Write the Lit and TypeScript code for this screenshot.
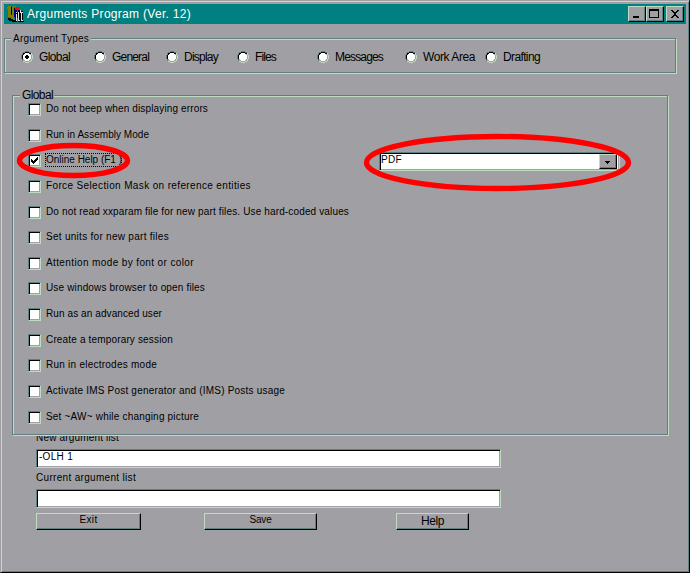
import { LitElement, html, css, svg, nothing } from "lit";
import { customElement, property, state } from "lit/decorators.js";
import { classMap } from "lit/directives/class-map.js";
import { styleMap } from "lit/directives/style-map.js";

/** A single line of text tracked out (or in) to fill a given width. */
@customElement("ui-text")
class UiText extends LitElement {
  static styles = css`
    :host { display: block; flex: none; white-space: pre; }
    .t { display: inline-block; }
  `;
  @property() text = "";
  @property({ type: Number }) w = 0;
  @state() spacing = 0;

  updated(changed: Map<string, unknown>) {
    if (!changed.has("text") && !changed.has("w")) return;
    const el = this.renderRoot.querySelector(".t") as HTMLElement;
    const natural = el.getBoundingClientRect().width - this.spacing * this.text.length;
    this.spacing = (this.w + 1 - natural) / this.text.length;
  }
  render() {
    return html`<span class="t" style=${styleMap({ letterSpacing: this.spacing + "px" })}>${this.text}</span>`;
  }
}

const TYPES = [
  { label: "Global", cell: 73, w: 30 },
  { label: "General", cell: 72, w: 36 },
  { label: "Display", cell: 71, w: 33 },
  { label: "Files", cell: 80, w: 20 },
  { label: "Messages", cell: 88, w: 47 },
  { label: "Work Area", cell: 80, w: 51 },
  { label: "Drafting", cell: 80, w: 36 },
];

const OPTIONS = [
  { label: "Do not beep when displaying errors", w: 161, h: 26 },
  { label: "Run in Assembly Mode", w: 102, h: 25 },
  { label: "Online Help (F1 )", w: 75, h: 26 },
  { label: "Force Selection Mask on reference entities", w: 204, h: 26 },
  { label: "Do not read xxparam file for new part files. Use hard-coded values", w: 302, h: 25 },
  { label: "Set units for new part files", w: 122, h: 26 },
  { label: "Attention mode by font or color", w: 147, h: 25 },
  { label: "Use windows browser to open files", w: 158, h: 26 },
  { label: "Run as an advanced user", w: 115, h: 26 },
  { label: "Create a temporary session", w: 126, h: 25 },
  { label: "Run in electrodes mode", w: 110, h: 26 },
  { label: "Activate IMS Post generator and (IMS) Posts usage", w: 238, h: 26 },
  { label: "Set ~AW~ while changing picture", w: 152, h: 13 },
];

@customElement("app-root")
class AppRoot extends LitElement {
  static styles = css`
    :host {
      --face: #a0a0a4; --hi: #c0dcc0; --lo: #5f8080;
      display: block; width: 690px; height: 573px; overflow: hidden;
      font: 10px/12px "Liberation Sans", Arial, sans-serif; color: #000;
    }
    * { box-sizing: border-box; }
    svg { display: block; flex: none; }
    .window {
      position: relative; width: 690px; height: 573px; background: var(--face);
      border: 1px solid; border-color: var(--face) #000 #000 var(--face);
      box-shadow: inset 1px 1px var(--hi), inset -1px -1px var(--lo);
      padding: 3px 2px 0 3px;
    }
    .title { display: flex; height: 20px; width: 682px; background: #008080; padding: 2px 2px 0 3px; }
    .caption { color: #fff; font-size: 12px; line-height: 14px; margin: 1px 0 0 3px; }
    .buttons { display: flex; margin-left: auto; }
    .raised {
      background: var(--face); border: 1px solid; border-color: var(--hi) #000 #000 var(--hi);
      box-shadow: inset -1px -1px var(--lo);
    }
    .wb { width: 18px; height: 16px; }
    .wb.gap { margin-left: 2px; }
    .etched { border: 1px solid var(--lo); box-shadow: 1px 1px var(--hi), inset 1px 1px var(--hi); }
    .types { width: 672px; height: 35px; margin-top: 14px; padding-left: 6px; }
    .legend { background: var(--face); padding: 0 2px; }
    .types .legend { margin-top: -6px; height: 12px; width: 80px; }
    .radios { display: flex; margin: 6px 0 0 10px; }
    .radio { display: flex; flex: none; gap: 6px; font-size: 12px; line-height: 13px; }
    .options { width: 656px; height: 340px; margin: 22px 0 0 8px; padding-left: 7px; }
    .options .legend { height: 15px; margin-top: -8px; width: 34px; font-size: 12px; line-height: 15px; }
    .rows { padding-left: 8px; }
    .row { display: flex; }
    .sunken {
      background: #fff; border: 1px solid; border-color: var(--lo) var(--hi) var(--hi) var(--lo);
      box-shadow: inset 1px 1px #000, inset -1px -1px var(--face);
    }
    .check { width: 13px; height: 13px; flex: none; }
    .lab { height: 12px; margin-left: 5px; }
    .focus { outline: 1px dotted #000; width: 75px; }
    .combo {
      display: flex; justify-content: space-between; width: 241px; height: 19px;
      margin: -2px 0 -8px 258px; padding: 1px 2px 0 1px;
    }
    .drop { width: 18px; height: 15px; }
    .form { padding-left: 32px; width: 520px; margin-top: 1px; }
    .clip { height: 13px; overflow: hidden; }
    .clip ui-text { margin-top: -4px; }
    .field { width: 465px; height: 19px; padding: 1px 0 0 2px; }
    .second { height: 21px; padding-top: 4px; }
    .actions { display: flex; margin-top: 5px; }
    .btn { height: 17px; display: flex; justify-content: center; }
    .exit { width: 105px; }
    .save { width: 113px; margin-left: 63px; }
    .help { width: 73px; margin-left: 79px; font-size: 12px; line-height: 15px; }
    .mark { position: absolute; left: -1px; top: -1px; pointer-events: none; }
  `;

  @state() private active = "Global";
  @state() private checked = new Set(["Online Help (F1 )"]);

  private toggle(label: string) {
    const next = new Set(this.checked);
    if (!next.delete(label)) next.add(label);
    this.checked = next;
  }

  private radio(on: boolean) {
    return html`<svg width="12" height="12" viewBox="0 0 12 12" shape-rendering="crispEdges">
      <path fill="#fff" d="M4 2h4v1h1v1h1v4h-1v1h-1v1h-4v-1h-1v-1h-1v-4h1v-1h1z"/>
      <path fill="#5f8080" d="M4 0h4v1h2v1h-2v-1h-4v1h-2v-1h2zM1 2h1v2h-1v4h1v2h-1v-2h-1v-4h1z"/>
      <path fill="#000" d="M4 1h4v1h2v1h-2v-1h-4v1h-1v1h-1v4h-1v-4h1v-2h2z"/>
      <path fill="#c0dcc0" d="M10 2h1v2h1v4h-1v2h-1v1h-2v1h-4v-1h-2v-1h2v1h4v-1h2v-2h1v-4h-1z"/>
      ${on ? svg`<path fill="#000" d="M5 4h2v1h1v2h-1v1h-2v-1h-1v-2h1z"/>` : nothing}
    </svg>`;
  }

  private logo() {
    return html`<svg width="17" height="17" viewBox="0 0 17 17" shape-rendering="crispEdges">
      <path fill="#808000" d="M0 1h1v-1h3v9h1v2h-4v-8h-1zM5 1h1v-1h3v1h-2v4h2v5h-2v3h2v2h-4v-1h-2v-3h2z"/>
      <path fill="#000" d="M4 1h1v8h-1zM7 2h1v3h-1zM1 12h3v1h2v1h4v2h-5v-1h-3v-1h-1zM11 4h2v1h3v10h1v1h-6z"/>
      <path fill="#000080" d="M7 4h3v2h1v6h-1v3h-2v-4h-1z"/>
      <path fill="#f00" d="M9 1h3v3h-4v-2h1z"/>
      <path fill="#e0e0e0" d="M9 6h1v1h-1zM9 8h1v7h-1zM11 6h1v8h1v1h-2zM13 4h1v2h2v1h-1v7h1v1h-2v-8h-1z"/>
    </svg>`;
  }

  render() {
    return html`
      <div class="window">
        <div class="title">
          ${this.logo()}
          <ui-text class="caption" .text=${"Arguments Program (Ver. 12)"} .w=${163}></ui-text>
          <div class="buttons">
            <div class="wb raised"><svg width="16" height="14" shape-rendering="crispEdges"><path d="M4 9h6v2h-6z"/></svg></div>
            <div class="wb raised"><svg width="16" height="14" shape-rendering="crispEdges"><path fill-rule="evenodd" d="M2 2h10v9h-10zM3 4h8v6h-8z"/></svg></div>
            <div class="wb raised gap"><svg width="16" height="14" shape-rendering="crispEdges"><path d="M4 3h2v1h1v1h2v-1h1v-1h2v1h-1v1h-1v1h-1v2h1v1h1v1h1v1h-2v-1h-1v-1h-2v1h-1v1h-2v-1h1v-1h1v-1h1v-2h-1v-1h-1v-1h-1z"/></svg></div>
          </div>
        </div>

        <div class="types etched">
          <div class="legend"><ui-text .text=${"Argument Types"} .w=${75}></ui-text></div>
          <div class="radios">
            ${TYPES.map((t) => html`
              <div class="radio" style=${styleMap({ width: t.cell + "px" })} @click=${() => (this.active = t.label)}>
                ${this.radio(this.active === t.label)}
                <ui-text .text=${t.label} .w=${t.w}></ui-text>
              </div>`)}
          </div>
        </div>

        <div class="options etched">
          <div class="legend"><ui-text .text=${"Global"} .w=${30}></ui-text></div>
          <div class="rows">
            ${OPTIONS.map((o, i) => html`
              <div class="row" style=${styleMap({ height: o.h + "px" })}>
                <div class="check sunken" @click=${() => this.toggle(o.label)}>
                  ${this.checked.has(o.label)
                    ? html`<svg width="11" height="11" shape-rendering="crispEdges"><path d="M2 4h1v1h1v1h1v-1h1v-1h1v-1h1v-1h1v3h-1v1h-1v1h-1v1h-1v1h-1v-1h-1v-1h-1z"/></svg>`
                    : nothing}
                </div>
                <div class=${classMap({ lab: true, focus: i === 2 })}><ui-text .text=${o.label} .w=${o.w}></ui-text></div>
                ${i === 2
                  ? html`<div class="combo sunken"><ui-text .text=${"PDF"} .w=${20}></ui-text>
                      <div class="drop raised"><svg width="16" height="13" shape-rendering="crispEdges"><path d="M5 6h5v1h-1v1h-1v1h-1v-1h-1v-1h-1z"/></svg></div></div>`
                  : nothing}
              </div>`)}
          </div>
        </div>

        <div class="form">
          <div class="clip"><ui-text .text=${"New argument list"} .w=${82}></ui-text></div>
          <div class="field sunken"><ui-text .text=${"-OLH 1"} .w=${33}></ui-text></div>
          <div class="second"><ui-text .text=${"Current argument list"} .w=${99}></ui-text></div>
          <div class="field sunken"></div>
          <div class="actions">
            <div class="btn raised exit"><ui-text .text=${"Exit"} .w=${17}></ui-text></div>
            <div class="btn raised save"><ui-text .text=${"Save"} .w=${21}></ui-text></div>
            <div class="btn raised help"><ui-text .text=${"Help"} .w=${22}></ui-text></div>
          </div>
        </div>

        <svg class="mark" width="690" height="573" fill="none" stroke="#f00" stroke-width="5.4">
          <ellipse cx="73.5" cy="160.5" rx="54" ry="15"/>
          <ellipse cx="497.5" cy="162.5" rx="131" ry="26"/>
        </svg>
      </div>`;
  }
}
